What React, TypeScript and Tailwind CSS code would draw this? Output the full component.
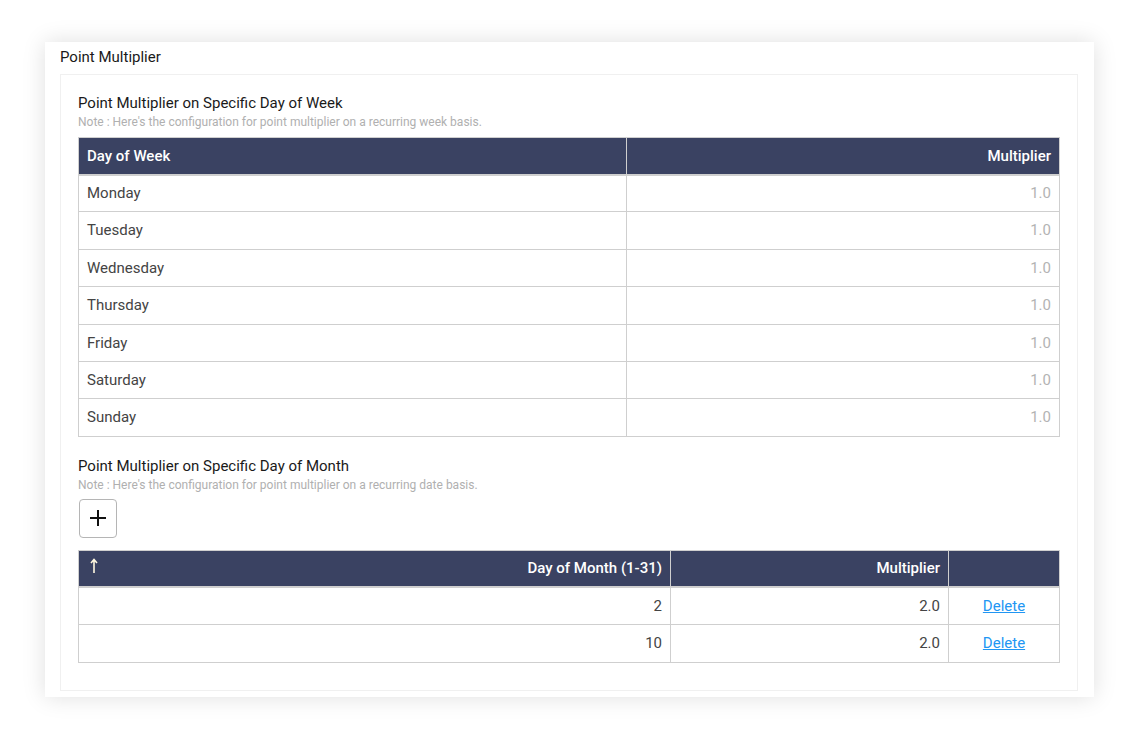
import React from 'react';

const WEEK = ['Monday', 'Tuesday', 'Wednesday', 'Thursday', 'Friday', 'Saturday', 'Sunday'];

const MONTH_ROWS = [
  { day: 2, multiplier: '2.0' },
  { day: 10, multiplier: '2.0' },
];

function SectionTitle({ title, note }: { title: string; note: string }) {
  return (
    <div>
      <p className="text-[15px] leading-[20px] text-[#1a1a1a]">{title}</p>
      <p className="mt-[2px] text-[12px] leading-[15px] text-[#b0b0b0]">{note}</p>
    </div>
  );
}

export default function App() {
  return (
    <div className="min-h-screen bg-white pl-[45px] pt-[42px] font-['Roboto',sans-serif]">
      <div className="w-[1049px] bg-white px-[15px] pb-[6px] pt-[5px] shadow-[0_0_22px_rgba(0,0,0,0.13)]">
        <h2 className="text-[15px] leading-[20px] font-normal text-[#1a1a1a]">Point Multiplier</h2>

        <div className="mt-[7px] w-[1018px] border border-[#f0f0f0] px-[17px] pb-[27px] pt-[18px]">
          <SectionTitle
            title="Point Multiplier on Specific Day of Week"
            note="Note : Here's the configuration for point multiplier on a recurring week basis."
          />

          <table className="mt-[7px] w-full border-collapse text-[15px]">
            <thead>
              <tr className="h-[37px] bg-[#3a4262] text-white">
                <th className="w-[548px] border border-[#cfcfcf] border-b-2 px-[8px] text-left font-medium">Day of Week</th>
                <th className="border border-[#cfcfcf] border-b-2 px-[8px] text-right font-medium">Multiplier</th>
              </tr>
            </thead>
            <tbody>
              {WEEK.map((day) => (
                <tr key={day} className="h-[37.4px]">
                  <td className="border border-[#cfcfcf] px-[8px] text-[#444]">{day}</td>
                  <td className="border border-[#cfcfcf] px-[8px] text-right text-[#b3b3b3]">1.0</td>
                </tr>
              ))}
            </tbody>
          </table>

          <div className="mt-[19px]">
            <SectionTitle
              title="Point Multiplier on Specific Day of Month"
              note="Note : Here's the configuration for point multiplier on a recurring date basis."
            />
          </div>

          <button
            type="button"
            className="mt-[6px] ml-[1px] flex h-[39px] w-[38px] items-center justify-center rounded-[4px] border border-[#b5b5b5] bg-white text-[#111]"
          >
            <svg width="18" height="18" viewBox="0 0 18 18" fill="none" stroke="currentColor" strokeWidth="2">
              <path d="M9 1v16M1 9h16" />
            </svg>
          </button>

          <table className="mt-[12px] w-full border-collapse text-[15px]">
            <thead>
              <tr className="h-[37px] bg-[#3a4262] text-white">
                <th className="w-[592px] border border-[#cfcfcf] border-b-2 px-[8px] font-medium">
                  <div className="flex items-center justify-between">
                    <svg width="8" height="16" viewBox="0 0 8 16" fill="none" stroke="#fff8e0" strokeWidth="1.6" className="ml-[3px] -mt-[4px]">
                      <path d="M4 15V2M1 5l3-3.5L7 5" />
                    </svg>
                    <span>Day of Month (1-31)</span>
                  </div>
                </th>
                <th className="w-[278px] border border-[#cfcfcf] border-b-2 px-[8px] text-right font-medium">Multiplier</th>
                <th className="border border-[#cfcfcf] border-b-2 px-[8px]" />
              </tr>
            </thead>
            <tbody>
              {MONTH_ROWS.map((row) => (
                <tr key={row.day} className="h-[37.5px]">
                  <td className="border border-[#cfcfcf] px-[8px] text-right text-[#444]">{row.day}</td>
                  <td className="border border-[#cfcfcf] px-[8px] text-right text-[#444]">{row.multiplier}</td>
                  <td className="border border-[#cfcfcf] px-[8px] text-center">
                    <a href="#" className="text-[#2196f3] underline">Delete</a>
                  </td>
                </tr>
              ))}
            </tbody>
          </table>
        </div>
      </div>
    </div>
  );
}
